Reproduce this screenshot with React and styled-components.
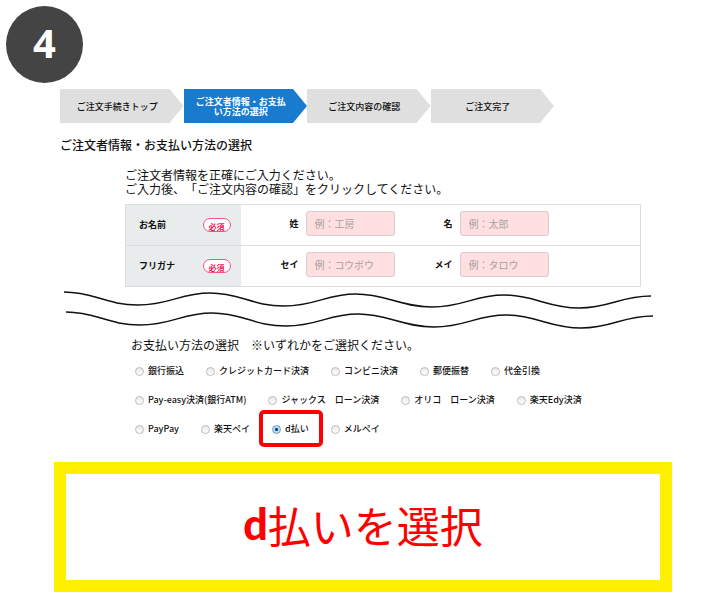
import React, { useState } from "react";
import styled, { createGlobalStyle } from "styled-components";

const steps = [
  "ご注文手続きトップ",
  "ご注文者情報・お支払い方法の選択",
  "ご注文内容の確認",
  "ご注文完了",
];

const nameRows = [
  {
    title: "お名前",
    fields: [
      { id: "sei", label: "姓", example: "例：工房" },
      { id: "mei", label: "名", example: "例：太郎" },
    ],
  },
  {
    title: "フリガナ",
    fields: [
      { id: "sei-kana", label: "セイ", example: "例：コウボウ" },
      { id: "mei-kana", label: "メイ", example: "例：タロウ" },
    ],
  },
];

const paymentRows = [
  ["銀行振込", "クレジットカード決済", "コンビニ決済", "郵便振替", "代金引換"],
  [
    "Pay-easy決済(銀行ATM)",
    "ジャックス　ローン決済",
    "オリコ　ローン決済",
    "楽天Edy決済",
  ],
  ["PayPay", "楽天ペイ", "d払い", "メルペイ"],
];

const wave =
  "M0 2 C30 2 42 15 74 15 S116 3 146 3 S188 16 220 16 S262 4 292 4 S336 17 368 17 S410 5 440 5 S484 18 515 18 S556 6 587 6";

const App = () => {
  const [payment, setPayment] = useState("d払い");

  return (
    <Page>
      <GlobalStyle />
      <StepNumber>4</StepNumber>
      <Main>
        <Steps>
          {steps.map((value, index) => (
            <Step key={value} $active={index === 1}>
              {value}
            </Step>
          ))}
        </Steps>
        <Heading>ご注文者情報・お支払い方法の選択</Heading>
        <Form>
          <Lead>
            ご注文者情報を正確にご入力ください。
            <br />
            ご入力後、「ご注文内容の確認」をクリックしてください。
          </Lead>
          <Table>
            <tbody>
              {nameRows.map((row) => (
                <tr key={row.title}>
                  <HeadCell scope="row">
                    <HeadContent>
                      {row.title}
                      <Required>必須</Required>
                    </HeadContent>
                  </HeadCell>
                  <Cell>
                    <Fields>
                      {row.fields.map((field) => (
                        <Field key={field.id}>
                          <FieldLabel htmlFor={field.id}>
                            {field.label}
                          </FieldLabel>
                          <TextBox
                            id={field.id}
                            type="text"
                            placeholder={field.example}
                          />
                        </Field>
                      ))}
                    </Fields>
                  </Cell>
                </tr>
              ))}
            </tbody>
          </Table>
        </Form>
        <Waves viewBox="0 0 590 40" aria-hidden="true">
          <path d={wave} />
          <path d={wave} transform="translate(2 20)" />
        </Waves>
        <Payment>
          <Legend>お支払い方法の選択　※いずれかをご選択ください。</Legend>
          <Rows>
            {paymentRows.map((row) => (
              <Row key={row[0]}>
                {row.map((value) => (
                  <Option key={value} $marked={value === "d払い"}>
                    <Radio
                      type="radio"
                      name="payment"
                      value={value}
                      checked={payment === value}
                      onChange={() => setPayment(value)}
                    />
                    {value}
                  </Option>
                ))}
              </Row>
            ))}
          </Rows>
        </Payment>
        <Callout>
          <Latin>d</Latin>払いを選択
        </Callout>
      </Main>
    </Page>
  );
};

export default App;

const GlobalStyle = createGlobalStyle`
  * {
    box-sizing: border-box;
  }

  body {
    margin: 0;
    background-color: #ffffff;
    color: #111111;
    font-family: "Noto Sans CJK JP", sans-serif;
    text-spacing-trim: space-all;
  }
`;

const Page = styled.div`
  padding: 6px 0;
`;

const StepNumber = styled.div`
  display: flex;
  align-items: center;
  justify-content: center;
  width: 77px;
  height: 77px;
  padding-bottom: 4px;
  margin-left: 6px;
  border-radius: 50%;
  background-color: #444444;
  color: #ffffff;
  font-family: "Open Sans", sans-serif;
  font-size: 40px;
  font-weight: 700;
  line-height: 40px;
`;

const Main = styled.main`
  padding: 6px 48px 0 54px;
`;

const Steps = styled.ol`
  display: grid;
  grid-template-columns: repeat(4, 1fr);
  max-width: 500px;
  margin: 0;
  padding: 0 0 0 6px;
  list-style: none;
`;

const Step = styled.li`
  display: flex;
  align-items: center;
  justify-content: center;
  height: 34px;
  padding: 2px 20px 0 11px;
  background-color: ${(props) => (props.$active ? "#187bcd" : "#dfdfdf")};
  color: ${(props) => (props.$active ? "#ffffff" : "#111111")};
  clip-path: polygon(0 0, calc(100% - 14px) 0, 100% 50%, calc(100% - 14px) 100%, 0 100%);
  font-size: 9px;
  font-weight: ${(props) => (props.$active ? 700 : 500)};
  line-height: 10px;
  text-align: center;
`;

const Heading = styled.h1`
  margin: 14px 0 15px 6px;
  font-size: 12px;
  font-weight: 500;
  line-height: 16px;
`;

const Form = styled.section`
  margin: 0 31px 0 71px;
`;

const Lead = styled.p`
  margin: 0 0 8px;
  font-size: 12px;
  line-height: 14px;
`;

const Table = styled.table`
  width: 100%;
  border-collapse: collapse;
  border: 1px solid #dddddd;
`;

const HeadCell = styled.th`
  width: 115px;
  height: 41px;
  padding: 0 10px 0 13px;
  border: 1px solid #dddddd;
  border-right: none;
  background-color: #e9eced;
  font-size: 9px;
  font-weight: 700;
  line-height: 14px;
`;

const HeadContent = styled.div`
  display: flex;
  align-items: center;
  justify-content: space-between;
`;

const Required = styled.span`
  width: 28px;
  height: 14px;
  border: 1px solid #ff4f86;
  border-radius: 7px;
  background-color: #ffffff;
  color: #f01858;
  font-size: 8px;
  line-height: 16px;
  text-align: center;
`;

const Cell = styled.td`
  padding: 0 0 3px;
  border-bottom: 1px solid #dddddd;
`;

const Fields = styled.div`
  display: flex;
`;

const Field = styled.div`
  display: flex;
  align-items: center;
  gap: 7px;
`;

const FieldLabel = styled.label`
  width: 58px;
  font-size: 9px;
  font-weight: 700;
  line-height: 14px;
  text-align: right;
`;

const TextBox = styled.input`
  width: 89px;
  height: 25px;
  padding: 0 8px;
  border: 1px solid #d9cccc;
  border-radius: 3px;
  background-color: #ffdfdf;
  color: #111111;
  font-family: inherit;
  font-size: 10px;

  &::placeholder {
    color: #a99fa0;
    opacity: 1;
  }
`;

const Waves = styled.svg`
  display: block;
  width: calc(100% - 28px);
  margin: 3px 0 7px 10px;
  fill: none;
  stroke: #111111;
  stroke-width: 1.5;
`;

const Payment = styled.fieldset`
  margin: 0 0 26px 77px;
  padding: 0;
  border: none;
`;

const Legend = styled.legend`
  padding: 0;
  font-size: 12px;
  line-height: 16px;
`;

const Rows = styled.div`
  display: flex;
  flex-direction: column;
  gap: 15px;
  padding: 11px 0 0 4px;
`;

const Row = styled.div`
  display: flex;
  gap: 22px;
`;

const Option = styled.label`
  position: relative;
  display: flex;
  align-items: center;
  gap: 4px;
  font-size: 9px;
  font-weight: 500;
  line-height: 14px;
  white-space: nowrap;

  &::after {
    content: "";
    display: ${(props) => (props.$marked ? "block" : "none")};
    position: absolute;
    inset: -12px -14px -11px -13px;
    border: 4px solid #ff0000;
    border-radius: 5px;
    pointer-events: none;
  }
`;

const Radio = styled.input`
  appearance: none;
  width: 9px;
  height: 9px;
  margin: 0;
  border: 1px solid #bcbcbc;
  border-radius: 50%;
  background: linear-gradient(#e8e8e8, #ffffff);

  &:checked {
    border-color: #6f9cc4;
    background: radial-gradient(circle, #12365c 0 1px, #b5def7 2px);
  }
`;

const Callout = styled.p`
  display: flex;
  align-items: center;
  justify-content: center;
  height: 130px;
  margin: 0;
  padding-bottom: 6px;
  border: 12px solid #fff000;
  color: #ff0000;
  font-size: 43px;
  line-height: 50px;
`;

const Latin = styled.span`
  font-family: Lato, sans-serif;
  font-weight: 900;
`;
